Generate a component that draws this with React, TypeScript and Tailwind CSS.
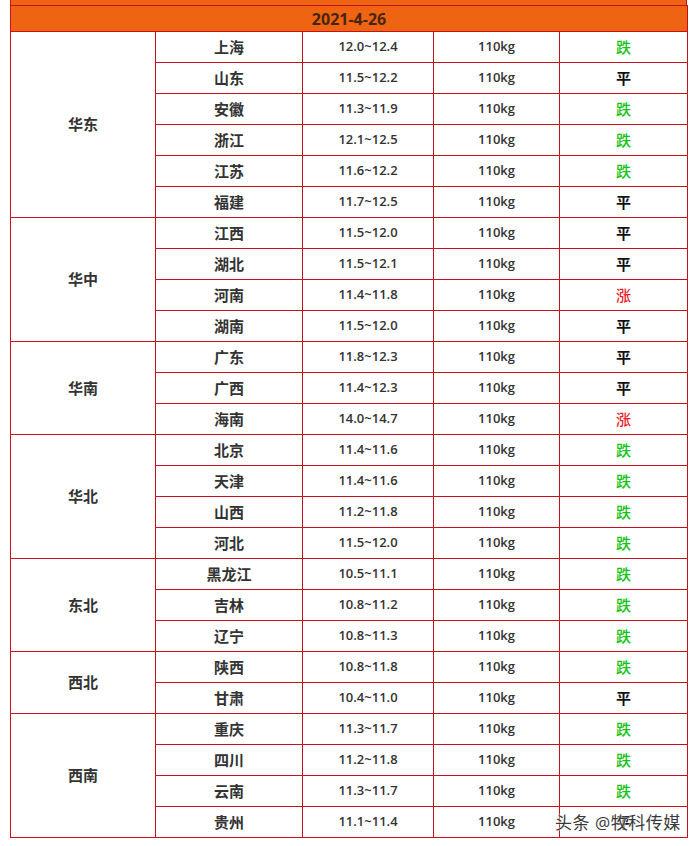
const groups: { region: string; rows: [string, string, string][] }[] = [
  {
    region: "华东",
    rows: [
      ["上海", "12.0~12.4", "跌"],
      ["山东", "11.5~12.2", "平"],
      ["安徽", "11.3~11.9", "跌"],
      ["浙江", "12.1~12.5", "跌"],
      ["江苏", "11.6~12.2", "跌"],
      ["福建", "11.7~12.5", "平"],
    ],
  },
  {
    region: "华中",
    rows: [
      ["江西", "11.5~12.0", "平"],
      ["湖北", "11.5~12.1", "平"],
      ["河南", "11.4~11.8", "涨"],
      ["湖南", "11.5~12.0", "平"],
    ],
  },
  {
    region: "华南",
    rows: [
      ["广东", "11.8~12.3", "平"],
      ["广西", "11.4~12.3", "平"],
      ["海南", "14.0~14.7", "涨"],
    ],
  },
  {
    region: "华北",
    rows: [
      ["北京", "11.4~11.6", "跌"],
      ["天津", "11.4~11.6", "跌"],
      ["山西", "11.2~11.8", "跌"],
      ["河北", "11.5~12.0", "跌"],
    ],
  },
  {
    region: "东北",
    rows: [
      ["黑龙江", "10.5~11.1", "跌"],
      ["吉林", "10.8~11.2", "跌"],
      ["辽宁", "10.8~11.3", "跌"],
    ],
  },
  {
    region: "西北",
    rows: [
      ["陕西", "10.8~11.8", "跌"],
      ["甘肃", "10.4~11.0", "平"],
    ],
  },
  {
    region: "西南",
    rows: [
      ["重庆", "11.3~11.7", "跌"],
      ["四川", "11.2~11.8", "跌"],
      ["云南", "11.3~11.7", "跌"],
      ["贵州", "11.1~11.4", "平"],
    ],
  },
];

// colour per price trend
function trendClass(t: string) {
  if (t === "跌") return "text-[#16c416] font-medium";
  if (t === "涨") return "text-[#e8202a] font-medium";
  return "text-[#111] font-bold";
}

export default function App() {
  const cell = "border border-[#c8101c] text-center align-middle p-0";
  return (
    <div
      className="relative w-[698px] h-[846px] bg-white"
      style={{ fontFamily: '"Open Sans", "Noto Sans CJK SC", sans-serif' }}
    >
      <div className="ml-[10px] w-[677px] h-[5px] bg-[#ee6412] border-x border-[#c8101c]" />
      <table className="ml-[10px] w-[677px] border-collapse table-fixed text-[#333]">
        <colgroup>
          <col className="w-[145px]" />
          <col className="w-[147px]" />
          <col className="w-[131px]" />
          <col className="w-[126px]" />
          <col className="w-[128px]" />
        </colgroup>
        <thead>
          <tr className="h-[26px]">
            <th
              colSpan={5}
              className="border border-[#c8101c] bg-[#ee6412] text-[16px] font-bold text-[#4a2412] p-0"
            >
              2021-4-26
            </th>
          </tr>
        </thead>
        <tbody>
          {groups.map((g) =>
            g.rows.map((r, i) => (
              <tr key={g.region + r[0]} className="h-[31px]">
                {i === 0 && (
                  <td rowSpan={g.rows.length} className={`${cell} text-[15px] font-bold`}>
                    {g.region}
                  </td>
                )}
                <td className={`${cell} text-[15px] font-bold`}>{r[0]}</td>
                <td className={`${cell} text-[13px] font-semibold`}>{r[1]}</td>
                <td className={`${cell} text-[13px] font-semibold`}>110kg</td>
                <td className={`${cell} text-[15px] ${trendClass(r[2])}`}>{r[2]}</td>
              </tr>
            ))
          )}
        </tbody>
      </table>
      {/* watermark */}
      <div
        className="absolute left-[555px] top-[810px] text-[17px] text-[#3a3a3a] tracking-[0.5px]"
        style={{ textShadow: "0 0 2px #fff, 0 0 2px #fff" }}
      >
        头条 @牧科传媒
      </div>
    </div>
  );
}
